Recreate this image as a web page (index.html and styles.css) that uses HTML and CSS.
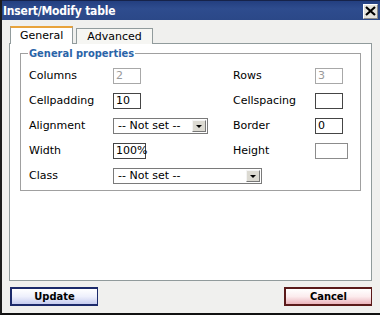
FILE: index.html
```html
<html lang="en">
<head>
    <meta charset="UTF-8">
    <title>Insert/Modify table</title>
    <link rel="stylesheet" href="styles.css">
</head>
<body>
    <div class="window">
        <!-- Title bar -->
        <div class="titlebar">
            <span class="title">Insert/Modify table</span>
            <span class="close">
                <svg width="11" height="10" viewBox="0 0 11 10"><path d="M1 1 L10 9 M10 1 L1 9" stroke="#000" stroke-width="2.2"/></svg>
            </span>
        </div>

        <div class="content">
            <!-- Tabs -->
            <div class="tabs">
                <div class="tab active">General</div>
                <div class="tab">Advanced</div>
            </div>

            <div class="panel">
                <fieldset>
                    <legend>General properties</legend>
                    <div class="form-grid">
                        <label>Columns</label>
                        <div><span class="field disabled w28">2</span></div>
                        <label>Rows</label>
                        <div><span class="field disabled w28">3</span></div>

                        <label>Cellpadding</label>
                        <div><span class="field w28">10</span></div>
                        <label>Cellspacing</label>
                        <div><span class="field w28"></span></div>

                        <label>Alignment</label>
                        <div><span class="select w94">-- Not set --<span class="arrow"></span></span></div>
                        <label>Border</label>
                        <div><span class="field w28">0</span></div>

                        <label>Width</label>
                        <div><span class="field w32">100%</span></div>
                        <label>Height</label>
                        <div><span class="field light w32"></span></div>

                        <label>Class</label>
                        <div class="span3"><span class="select w148">-- Not set --<span class="arrow"></span></span></div>
                    </div>
                </fieldset>
            </div>

            <!-- Buttons -->
            <div class="buttons">
                <button class="btn update">Update</button>
                <button class="btn cancel">Cancel</button>
            </div>
        </div>
    </div>
</body>
</html>
```

FILE: styles.css
```css
/* General */
body {
    margin: 0;
    font-family: "DejaVu Sans", Verdana, sans-serif;
    font-size: 11px;
    color: #000;
    background-color: #f0f0ee;
}

.window {
    width: 380px;
    height: 315px;
    box-sizing: border-box;
    border-left: 2px solid #1c1c1c;
    border-bottom: 2px solid #111;
    display: flex;
    flex-direction: column;
}

/* Title bar */
.titlebar {
    height: 20px;
    box-sizing: border-box;
    border-top: 1px solid #16234a;
    background: linear-gradient(#233f80, #2e4c8e 40%, #2b4888);
    display: flex;
    justify-content: space-between;
    align-items: center;
    padding: 0 2px 0 1px;
}

.title {
    color: #fff;
    font-family: "DejaVu Sans Condensed", "DejaVu Sans", sans-serif;
    font-weight: bold;
    font-size: 12px;
    letter-spacing: -0.2px;
}

.close {
    width: 15px;
    height: 15px;
    box-sizing: border-box;
    background-color: #e4e3dd;
    border: 1px solid #8a8a8a;
    border-top-color: #fff;
    border-left-color: #fff;
    display: flex;
    align-items: center;
    justify-content: center;
    margin-top: 1px;
}

.content {
    flex: 1;
    padding: 7px 8px 0 7px;
    display: flex;
    flex-direction: column;
}

/* Tabs */
.tabs {
    display: flex;
    align-items: flex-end;
    gap: 3px;
    height: 17px;
    padding-left: 1px;
    position: relative;
    z-index: 1;
    margin-bottom: -1px;
}

.tab {
    height: 16px;
    box-sizing: border-box;
    border: 1px solid #919b9c;
    border-bottom: none;
    background-color: #f6f6f3;
    padding: 0 10px;
    line-height: 15px;
}

.tab.active {
    height: 18px;
    background-color: #fff;
    border-top: 2px solid #e8a33c;
    padding: 0 9px;
    line-height: 16px;
}

/* Panel */
.panel {
    height: 238px;
    box-sizing: border-box;
    background-color: #fff;
    border: 1px solid #919b9c;
    padding: 3px 10px 0 10px;
}

fieldset {
    margin: 0;
    border: 1px solid #a0a0a0;
    padding: 2px 8px 2px 8px;
}

legend {
    color: #2a64a8;
    font-weight: bold;
    font-family: "DejaVu Sans Condensed", "DejaVu Sans", sans-serif;
    font-size: 11px;
    padding: 0 1px;
    margin-left: -1px;
}

.form-grid {
    display: grid;
    grid-template-columns: 84px 120px 82px 1fr;
    grid-auto-rows: 25px;
    align-items: center;
    margin-top: 1px;
}

.span3 {
    grid-column: 2 / 5;
}

/* Fake inputs */
.field,
.select {
    display: flex;
    align-items: center;
    height: 16px;
    box-sizing: border-box;
    border: 1px solid #454545;
    background-color: #fff;
    padding-left: 2px;
}

.field.disabled {
    color: #9a9a9a;
    border-color: #a8a8a8;
}

.field.light {
    border-color: #8c8c8c;
}

.w28 { width: 28px; }
.w32 { width: 33px; }
.w94 { width: 95px; }
.w148 { width: 149px; }

.select {
    border-color: #7a7a7a;
    padding-left: 4px;
    justify-content: space-between;
    padding-right: 1px;
}

.arrow {
    width: 14px;
    height: 12px;
    box-sizing: border-box;
    background-color: #dcdad2;
    border: 1px solid #777;
    border-top-color: #f4f4f4;
    border-left-color: #f4f4f4;
    position: relative;
}

.arrow::after {
    content: "";
    position: absolute;
    left: 3px;
    top: 4px;
    border-left: 3px solid transparent;
    border-right: 3px solid transparent;
    border-top: 3px solid #000;
}

/* Buttons */
.buttons {
    display: flex;
    justify-content: space-between;
    padding: 6px 0 0 1px;
}

.btn {
    width: 88px;
    height: 19px;
    font-family: "DejaVu Sans Condensed", "DejaVu Sans", sans-serif;
    font-weight: bold;
    font-size: 11px;
    padding: 0;
    cursor: pointer;
}

.update {
    border: 2px solid #1c2a6a;
    border-width: 2px 1px 2px 2px;
    background: linear-gradient(#ffffff, #eef0fc 50%, #c6ccef);
}

.cancel {
    border: 2px solid #5a1a1a;
    border-width: 2px 1px 2px 2px;
    background: linear-gradient(#ffffff, #fcecee 50%, #ebb4bc);
}
```
